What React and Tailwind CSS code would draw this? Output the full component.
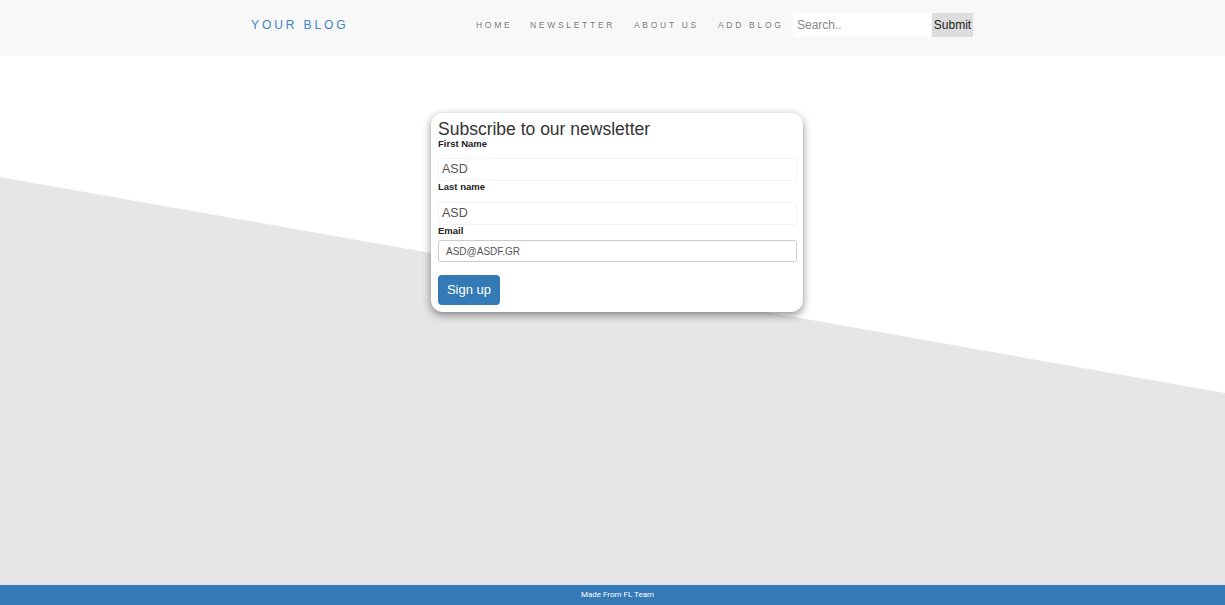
export default function App() {
  const font = { fontFamily: '"Liberation Sans", Arial, sans-serif' };
  return (
    <div className="w-[1225px] h-[605px] flex flex-col bg-white overflow-hidden" style={font}>
      <header className="h-[56px] bg-[#f8f8f8] flex items-start pt-[13px] shrink-0">
        <div className="ml-[251px] h-[24px] flex items-center text-[12px] tracking-[2.9px] text-[#3f86c6] w-[225px]">YOUR BLOG</div>
        <nav className="h-[24px] flex items-center text-[8.5px] tracking-[2.7px] text-[#7a7a7a]">
          <span className="w-[54px]">HOME</span>
          <span className="w-[104px]">NEWSLETTER</span>
          <span className="w-[84px]">ABOUT US</span>
          <span className="w-[75px]">ADD BLOG</span>
        </nav>
        <div className="flex items-center">
          <input
            className="w-[138px] h-[24px] bg-white px-[4px] text-[12px] text-[#333] outline-none placeholder:text-[#8a8a8a]"
            placeholder="Search.."
          />
          <button className="ml-[1px] w-[41px] h-[24px] bg-[#dddddd] text-[12px] text-[#222]">Submit</button>
        </div>
      </header>
      <main className="relative flex-1">
        <svg className="absolute inset-0 w-full h-full" viewBox="0 0 1225 529" preserveAspectRatio="none">
          <polygon points="0,121 1225,337 1225,529 0,529" fill="#e6e6e6" />
        </svg>
        <div className="relative ml-[431px] mt-[57px] w-[372px] bg-white rounded-[12px] shadow-[0_3px_8px_rgba(0,0,0,0.45)] px-[7px] pt-[6px] pb-[7px]">
          <h2 className="text-[17.5px] leading-[20px] text-[#333]">Subscribe to our newsletter</h2>
          <label className="block text-[9.5px] font-bold text-[#222] leading-[12px] mt-[-1px]">First Name</label>
          <div className="mt-[8px] h-[23px] w-[359px] border border-[#f2f2f2] rounded-[3px] px-[3px] flex items-center text-[12.5px] text-[#555]">ASD</div>
          <label className="block text-[9.5px] font-bold text-[#222] leading-[12px] mt-[0px]">Last name</label>
          <div className="mt-[9px] h-[23px] w-[359px] border border-[#f2f2f2] rounded-[3px] px-[3px] flex items-center text-[12.5px] text-[#555]">ASD</div>
          <label className="block text-[9.5px] font-bold text-[#222] leading-[12px] mt-[0px]">Email</label>
          <div className="mt-[3px] h-[22px] w-[359px] border border-[#cccccc] rounded-[3px] px-[7px] flex items-center text-[10px] text-[#555]">ASD@ASDF.GR</div>
          <button className="mt-[13px] h-[30px] w-[62px] bg-[#337ab7] rounded-[4px] text-white text-[13px]">Sign up</button>
        </div>
      </main>
      <footer className="h-[20px] bg-[#337ab7] shrink-0 flex items-center justify-center text-[8px] text-white" style={{ fontFamily: 'Roboto, sans-serif' }}>
        <span className="ml-[10px]">Made From FL Team</span>
      </footer>
    </div>
  );
}
